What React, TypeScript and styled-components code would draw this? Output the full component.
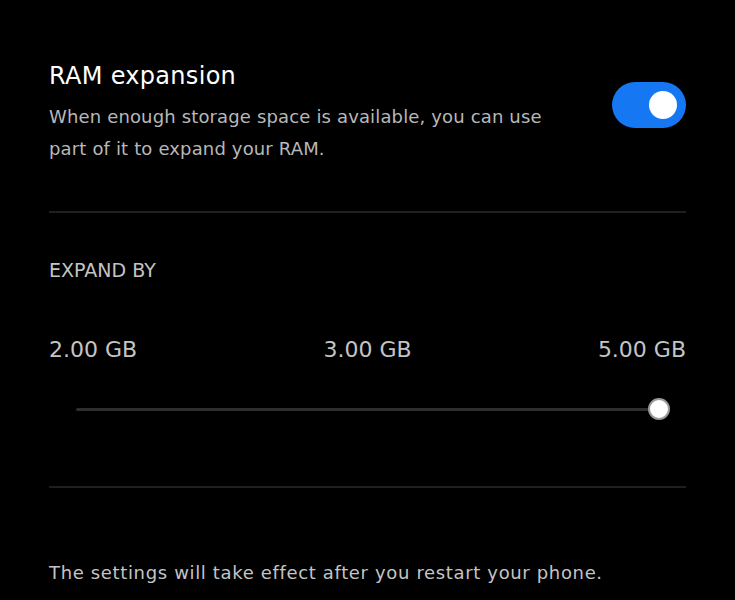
import styled, { createGlobalStyle } from "styled-components";

const GlobalStyle = createGlobalStyle`
  html, body {
    margin: 0;
    padding: 0;
    background: #000;
  }
  body {
    font-family: "DejaVu Sans", "Noto Sans", sans-serif;
    color: #fff;
  }
`;

const Page = styled.div`
  width: 735px;
  height: 600px;
  box-sizing: border-box;
  padding: 56px 49px 0 49px;
  background: #000;
  overflow: hidden;
`;

const SettingRow = styled.div`
  display: flex;
  align-items: flex-start;
  justify-content: space-between;
  gap: 24px;
`;

const TextBlock = styled.div`
  display: flex;
  flex-direction: column;
`;

const Title = styled.div`
  font-size: 24px;
  line-height: 40px;
  letter-spacing: 0.3px;
  color: #fff;
`;

const Description = styled.div`
  margin-top: 5px;
  font-size: 18px;
  line-height: 32px;
  letter-spacing: 0.15px;
  color: #b8b8b8;
  max-width: 510px;
`;

const Switch = styled.div<{ $on: boolean }>`
  flex: 0 0 auto;
  width: 74px;
  height: 46px;
  margin-top: 26px;
  border-radius: 23px;
  background: ${(p) => (p.$on ? "#1677f2" : "#444")};
  display: flex;
  align-items: center;
  justify-content: ${(p) => (p.$on ? "flex-end" : "flex-start")};
  padding: 0 9px;
  box-sizing: border-box;
`;

const Knob = styled.div`
  width: 28px;
  height: 28px;
  border-radius: 50%;
  background: #fff;
`;

const Divider = styled.div<{ $top: number }>`
  height: 2px;
  background: #1f1f1f;
  margin-top: ${(p) => p.$top}px;
`;

const SectionLabel = styled.div`
  margin-top: 44px;
  font-size: 19px;
  line-height: 26px;
  color: #c4c4c4;
`;

const ValueRow = styled.div`
  margin-top: 52px;
  display: grid;
  grid-template-columns: 1fr auto 1fr;
  font-size: 22px;
  line-height: 30px;
  color: #c4c4c4;

  span:nth-child(2) {
    text-align: center;
  }
  span:last-child {
    text-align: right;
  }
`;

const SliderWrap = styled.div`
  position: relative;
  margin: 33px 27px 0 27px;
  height: 22px;
  display: flex;
  align-items: center;
`;

const Track = styled.div`
  width: 100%;
  height: 3px;
  border-radius: 2px;
  background: #2e2e2e;
`;

const Thumb = styled.div`
  position: absolute;
  top: 0;
  width: 18px;
  height: 18px;
  border-radius: 50%;
  background: #fff;
  border: 2px solid #9a9a9a;
  transform: translateX(-50%);
`;

const Footer = styled.div`
  margin-top: 72px;
  font-size: 18px;
  line-height: 26px;
  letter-spacing: 0.65px;
  color: #c4c4c4;
`;

const values = ["2.00 GB", "3.00 GB", "5.00 GB"];
const sliderPos = 100;

export default function App() {
  return (
    <>
      <GlobalStyle />
      <Page>
        <SettingRow>
          <TextBlock>
            <Title>RAM expansion</Title>
            <Description>
              When enough storage space is available, you can use part of it to expand your RAM.
            </Description>
          </TextBlock>
          <Switch $on>
            <Knob />
          </Switch>
        </SettingRow>
        <Divider $top={46} />
        <SectionLabel>EXPAND BY</SectionLabel>
        <ValueRow>
          {values.map((v) => (
            <span key={v}>{v}</span>
          ))}
        </ValueRow>
        <SliderWrap>
          <Track />
          <Thumb style={{ left: `${sliderPos}%` }} />
        </SliderWrap>
        <Divider $top={66} />
        <Footer>The settings will take effect after you restart your phone.</Footer>
      </Page>
    </>
  );
}
